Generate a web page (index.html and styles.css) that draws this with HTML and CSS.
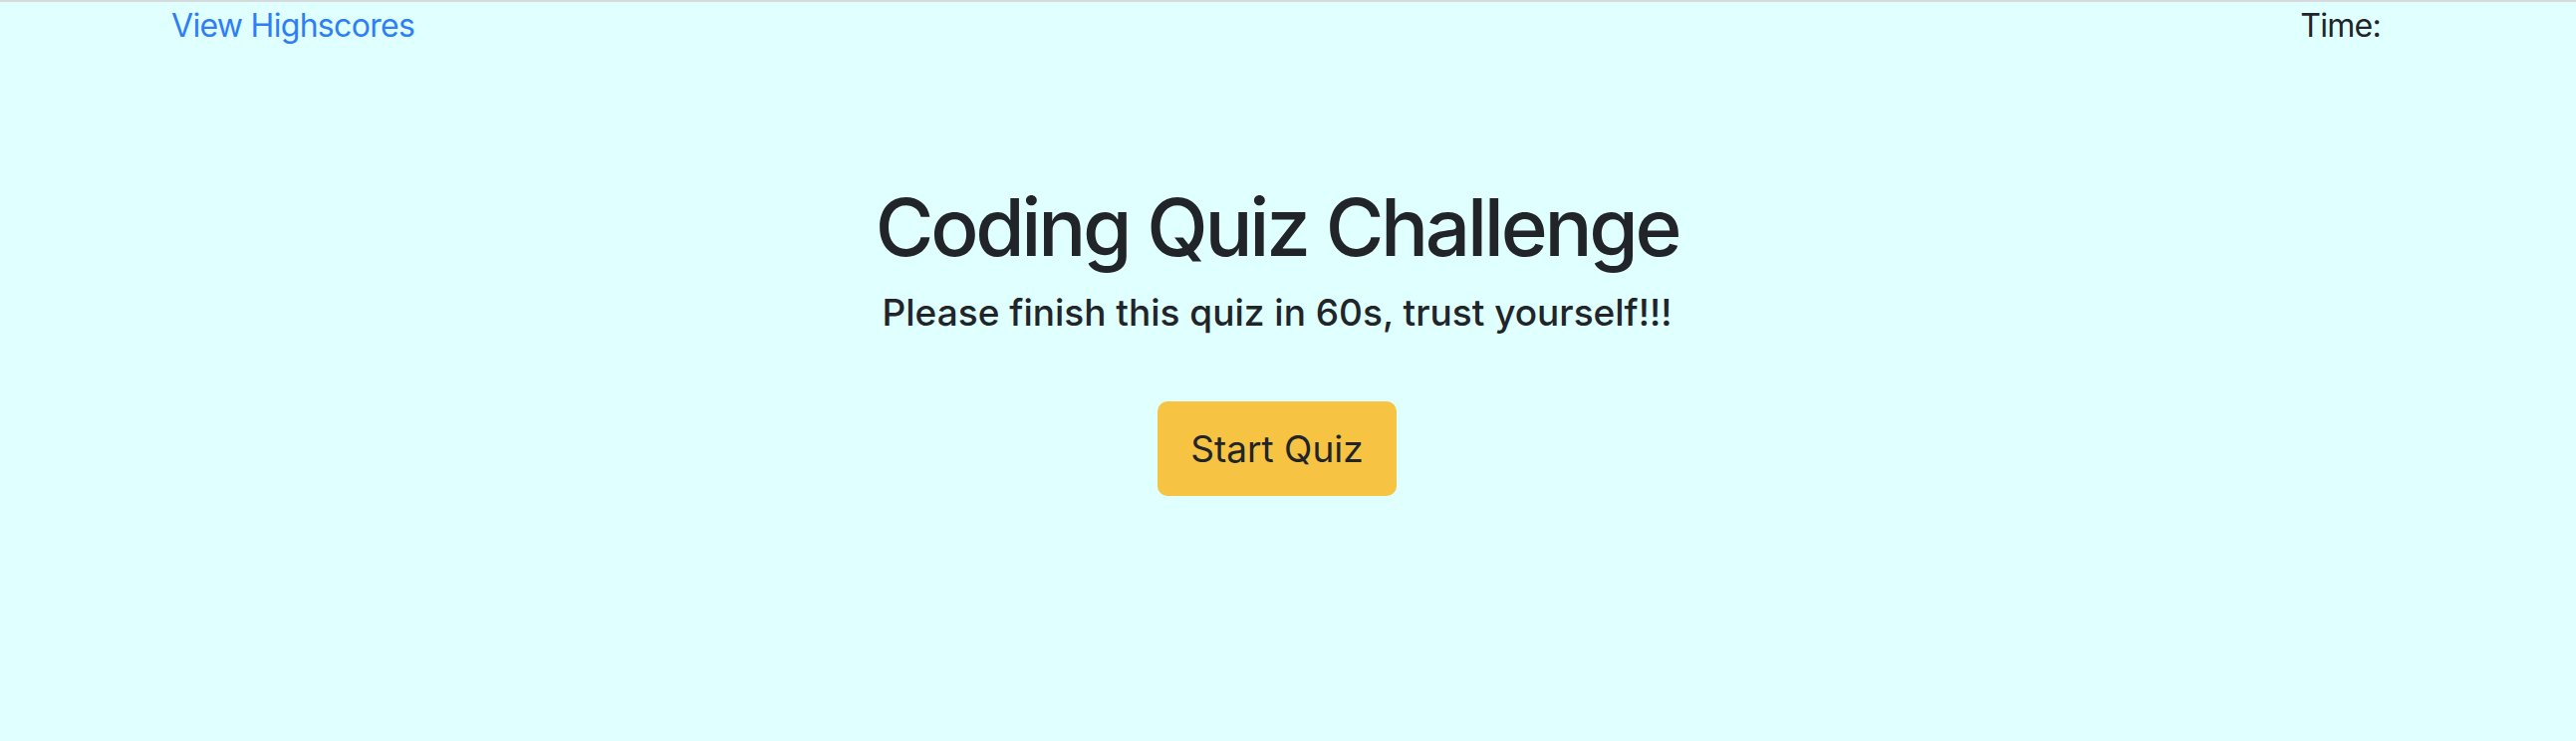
FILE: index.html
```html
<!DOCTYPE html>
<html lang="en">
<head>
<meta charset="utf-8">
<title>Coding Quiz Challenge</title>
<link rel="stylesheet" href="styles.css">
</head>
<body>
  <header class="topbar">
    <a class="highscores" href="#">View Highscores</a>
    <div class="timer">Time: <span class="time-value"></span></div>
  </header>
  <main class="hero">
    <h1 class="title">Coding Quiz Challenge</h1>
    <p class="subtitle">Please finish this quiz in 60s, trust yourself!!!</p>
    <button class="start-btn" type="button">Start Quiz</button>
  </main>
</body>
</html>
```
FILE: styles.css
```css
html, body {
  margin: 0;
  padding: 0;
}
body {
  background: #e0ffff;
  border-top: 2px solid #d6dadd;
  font-family: Inter, "Noto Sans", "Liberation Sans", sans-serif;
  color: #212529;
  min-height: 742px;
}
.topbar {
  display: flex;
  justify-content: space-between;
  align-items: center;
  padding: 0 196px 0 172px;
  font-size: 32px;
  line-height: 48px;
  letter-spacing: -0.7px;
}
.highscores {
  color: #2f7ef6;
  text-decoration: none;
}
.timer {
  color: #212529;
}
.hero {
  display: flex;
  flex-direction: column;
  align-items: center;
  padding-right: 22px;
  margin-top: 130px;
}
.title {
  margin: 0;
  font-size: 80px;
  line-height: 1.2;
  font-weight: 500;
  letter-spacing: -3.3px;
}
.subtitle {
  margin: 16px 0 0;
  font-size: 37px;
  line-height: 1.2;
  font-weight: 500;
}
.start-btn {
  margin-top: 67px;
  width: 240px;
  height: 95px;
  border: none;
  border-radius: 10px;
  background: #f6c343;
  color: #212529;
  font-family: inherit;
  font-size: 37px;
  cursor: pointer;
}
```
